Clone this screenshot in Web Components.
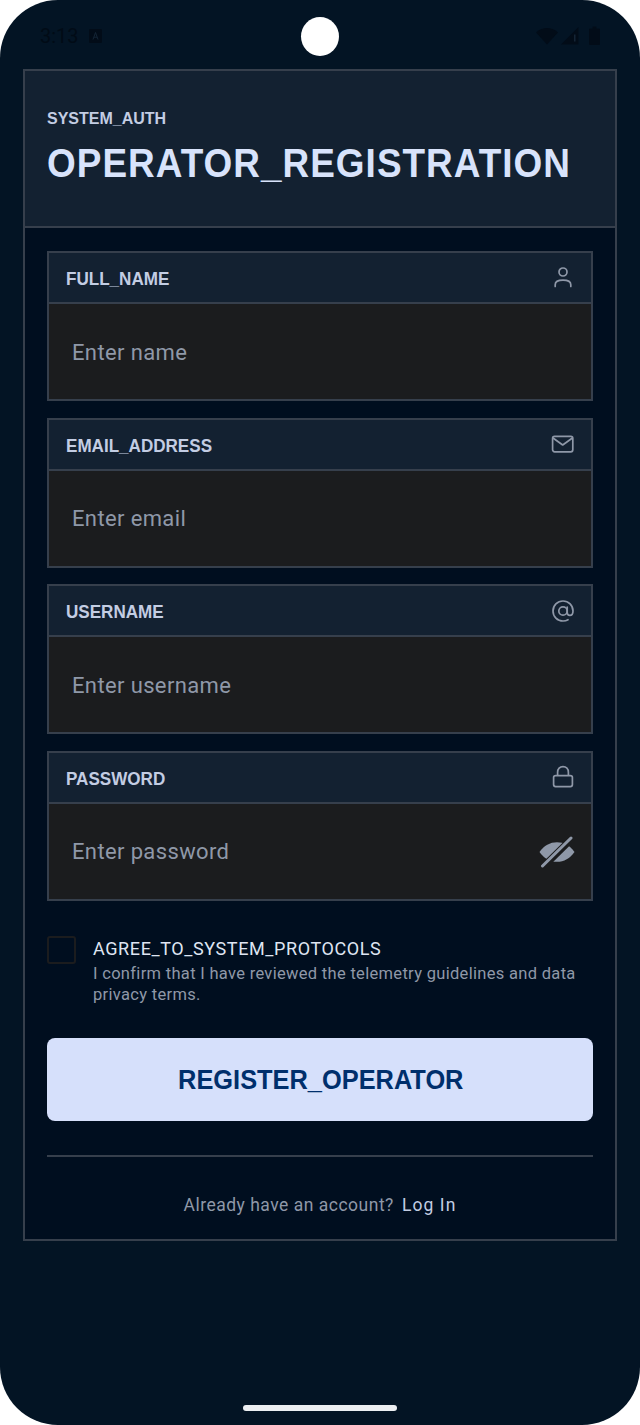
<!DOCTYPE html>
<html lang="en">
<head>
<meta charset="utf-8">
<title>Operator registration</title>
<style>
  html, body { margin: 0; padding: 0; background: #fff; }
</style>
</head>
<body>

<reg-phone>
  <reg-status-bar slot="status"></reg-status-bar>
  <reg-card>
    <reg-header eyebrow="SYSTEM_AUTH" title-text="OPERATOR_REGISTRATION"></reg-header>
    <reg-field label="FULL_NAME" placeholder="Enter name">
      <svg slot="icon" width="24" height="24" viewBox="0 0 24 24" fill="none" stroke="#8f98a8" stroke-width="1.7" stroke-linecap="round">
        <circle cx="12" cy="6" r="4"/>
        <path d="M4.200 20.400v-1.600c0-3 2.600-4.600 7.800-4.600s7.800 1.600 7.800 4.600v1.600"/>
      </svg>
    </reg-field>
    <reg-field label="EMAIL_ADDRESS" placeholder="Enter email">
      <svg slot="icon" width="24" height="24" viewBox="0 0 24 24" fill="none" stroke="#8f98a8" stroke-width="1.7" stroke-linejoin="round">
        <rect x="1.600" y="4.400" width="20.200" height="15.400" rx="2"/>
        <path d="M2 6l9.700 7 9.700-7"/>
      </svg>
    </reg-field>
    <reg-field label="USERNAME" placeholder="Enter username">
      <svg slot="icon" width="24" height="24" viewBox="0 0 24 24" fill="none" stroke="#8f98a8" stroke-width="1.700" stroke-linecap="round">
        <circle cx="12" cy="12" r="4.200"/>
        <path d="M16.200 8v5.600c0 1.700 1.200 2.800 2.600 2.800s3.200-1.200 3.200-4.400c0-5.600-4.400-10-10-10S2 6.400 2 12s4.400 10 10 10c1.900 0 3.500-.4 5-1.300"/>
      </svg>
    </reg-field>
    <reg-field label="PASSWORD" placeholder="Enter password" trailing>
      <svg slot="icon" width="24" height="24" viewBox="0 0 24 24" fill="none" stroke="#8f98a8" stroke-width="1.700" stroke-linejoin="round">
        <rect x="2.600" y="10.600" width="18.800" height="11" rx="2"/>
        <path d="M6.600 10.600V7.400C6.600 3.900 8.800 1.600 12 1.600s5.400 2.300 5.400 5.800v3.200"/>
      </svg>
      <svg slot="trailing" width="36" height="32" viewBox="0 0 36 32" fill="none">
        <path d="M.5 16C5 9.500 11 6.200 18 6.200S31 9.500 35.500 16C31 22.500 25 25.800 18 25.800S5 22.500 .5 16Z" fill="#8f98a8"/>
        <path d="M4.500 30.500 33.500 2" stroke="#1b1c1e" stroke-width="7"/>
        <path d="M3.500 30 32 2" stroke="#8f98a8" stroke-width="3" stroke-linecap="round"/>
      </svg>
    </reg-field>
    <reg-consent heading="AGREE_TO_SYSTEM_PROTOCOLS">I confirm that I have reviewed the telemetry guidelines and data privacy terms.</reg-consent>
    <reg-button>REGISTER_OPERATOR</reg-button>
    <reg-footer question="Already have an account?" action="Log In"></reg-footer>
  </reg-card>
  <reg-home-bar slot="home"></reg-home-bar>
</reg-phone>

<script>
(
    /**
    * Registers the custom elements that make up the operator registration screen
    */
    function () {

        const define = function (name, markup, setup) {
            const template = document.createElement('template');
            template.innerHTML = markup;

            class Element extends HTMLElement {
                constructor() {
                    super();
                    this.attachShadow({ mode: 'open' });
                    this.shadowRoot.appendChild(template.content.cloneNode(true));
                }

                connectedCallback() {
                    if (setup) {
                        setup(this, this.shadowRoot);
                    }
                }
            }
            window.customElements.define(name, Element);
        };

        const sans = '"Liberation Sans", Arial, sans-serif';
        const body = 'Roboto, "Noto Sans", sans-serif';

        define('reg-phone', `
            <style>
                :host { display: block; position: relative; width: 640px; height: 1425px; overflow: hidden; }
                .screen { display: flex; flex-direction: column; height: 100%; background: #031424; border-radius: 58px; }
                .main { flex: 1; padding: 0 23px; }
                .camera { position: absolute; left: 301px; top: 17px; width: 38px; height: 39px; border-radius: 50%; background: #fff; }
            </style>
            <div class="screen">
                <slot name="status"></slot>
                <div class="main"><slot></slot></div>
                <slot name="home"></slot>
            </div>
            <div class="camera"></div>
        `);

        define('reg-status-bar', `
            <style>
                :host { display: flex; align-items: center; justify-content: space-between; height: 69px; padding: 0 40px 0 40px; box-sizing: border-box; }
                .left, .right { display: flex; align-items: center; margin-bottom: -2px; }
                .left { gap: 10px; }
                .time { font: 20px/24px ${body}; color: #010b16; }
                .right { gap: 3px; }
                svg { display: block; }
            </style>
            <div class="left">
                <span class="time">3:13</span>
                <svg width="13" height="14" viewBox="0 0 13 14"><rect width="13" height="14" rx="1" fill="#020c18"/><path d="M4 10.500 6.500 3.500 9 10.500M4.800 8.200h3.400" fill="none" stroke="#142536" stroke-width="1"/></svg>
            </div>
            <div class="right">
                <svg width="22" height="18" viewBox="0 0 22 18"><path d="M0 5.500C3 2.500 6.800 1 11 1s8 1.500 11 4.500L11 17.500Z" fill="#020c18"/></svg>
                <svg width="18" height="18" viewBox="0 0 18 18"><path d="M0 17.500 17.500 0v17.500Z" fill="#020c18"/><path d="M13 7.500h1.500v7H13Z" fill="#142536"/></svg>
                <svg width="11" height="19" viewBox="0 0 11 19" style="margin-left:7px"><path d="M1 2.500h2.500V.5h4v2H10a1 1 0 0 1 1 1V18a1 1 0 0 1-1 1H1a1 1 0 0 1-1-1V3.500a1 1 0 0 1 1-1Z" fill="#020c18"/></svg>
            </div>
        `);

        define('reg-card', `
            <style>
                :host { display: block; width: 594px; height: 1172px; box-sizing: border-box; background: #000e1f; border: 2px solid #363f4c; }
                .stack { display: flex; flex-direction: column; }
            </style>
            <div class="stack"><slot></slot></div>
        `);

        define('reg-header', `
            <style>
                :host { display: block; height: 157px; margin-bottom: 23px; box-sizing: border-box; padding: 38px 22px 0; background: #132131; border-bottom: 2px solid #363f4c; }
                .eyebrow { font: 700 16px/20px ${sans}; color: #c3cde3; }
                h1 { margin: 10px 0 0; font: 700 41px/48px ${sans}; letter-spacing: 1.15px; color: #d8e3fb; white-space: nowrap; transform: scaleX(.9); transform-origin: left center; }
            </style>
            <div class="eyebrow"></div>
            <h1></h1>
        `, function (el, root) {
            root.querySelector('.eyebrow').textContent = el.getAttribute('eyebrow');
            root.querySelector('h1').textContent = el.getAttribute('title-text');
        });

        define('reg-field', `
            <style>
                :host { display: block; width: 546px; margin: 0 22px 16.67px; box-sizing: border-box; border: 2px solid #363f4c; background: #1b1c1e; height: 150px; }
                .head { display: flex; align-items: center; justify-content: space-between; height: 51px; box-sizing: border-box; padding: 0 16px 0 17px; background: #132131; border-bottom: 2px solid #363f4c; }
                .label { display: inline-block; padding-top: 3px; font: 700 18px/22px ${sans}; color: #c3cde3; transform: scaleX(.948); transform-origin: left center; }
                .row { display: flex; align-items: center; justify-content: space-between; height: 95px; box-sizing: border-box; padding: 2px 16px 0 23px; }
                .placeholder { font: 22px/28px ${body}; letter-spacing: .37px; color: #8f98a8; }
                ::slotted(svg) { display: block; }
            </style>
            <div class="head"><span class="label"></span><slot name="icon"></slot></div>
            <div class="row"><span class="placeholder"></span><slot name="trailing"></slot></div>
        `, function (el, root) {
            root.querySelector('.label').textContent = el.getAttribute('label');
            root.querySelector('.placeholder').textContent = el.getAttribute('placeholder');
        });

        define('reg-consent', `
            <style>
                :host { display: flex; gap: 17px; margin: 18px 22px 0; }
                .box { flex: none; width: 29px; height: 28px; box-sizing: border-box; border: 2px solid #1b1c1e; border-radius: 3px; }
                .text { flex: 1; margin-top: 2px; }
                .heading { margin-bottom: 3px; font: 18px/22px ${body}; letter-spacing: .6px; color: #dfe5f2; }
                .note { font: 16.500px/21px ${body}; letter-spacing: .31px; color: #8f98a8; }
            </style>
            <div class="box"></div>
            <div class="text">
                <div class="heading"></div>
                <div class="note"><slot></slot></div>
            </div>
        `, function (el, root) {
            root.querySelector('.heading').textContent = el.getAttribute('heading');
        });

        define('reg-button', `
            <style>
                :host { display: flex; align-items: center; justify-content: center; height: 83px; margin: 33px 22px 0; padding: 2px 0 0 2px; box-sizing: border-box; border-radius: 8px; background: #d6e0fb; font: 700 27px/32px ${sans}; color: #002f6c; }
                span { display: inline-block; transform: scaleX(.94); }
            </style>
            <span><slot></slot></span>
        `);

        define('reg-footer', `
            <style>
                :host { display: flex; align-items: center; justify-content: center; gap: 8px; height: 83px; margin: 34px 22px 0; padding-top: 16px; border-top: 2px solid #363f4c; box-sizing: border-box; }
                .question { font: 17.500px/22px ${body}; letter-spacing: .5px; color: #8f98a8; }
                .action { font: 17.500px/22px ${body}; letter-spacing: 1.1px; color: #c3cde3; }
            </style>
            <span class="question"></span>
            <span class="action"></span>
        `, function (el, root) {
            root.querySelector('.question').textContent = el.getAttribute('question');
            root.querySelector('.action').textContent = el.getAttribute('action');
        });

        define('reg-home-bar', `
            <style>
                :host { display: flex; justify-content: center; padding-bottom: 14px; }
                div { width: 154px; height: 6px; border-radius: 3px; background: #eceff2; }
            </style>
            <div></div>
        `);
    }
)();
</script>
</body>
</html>
